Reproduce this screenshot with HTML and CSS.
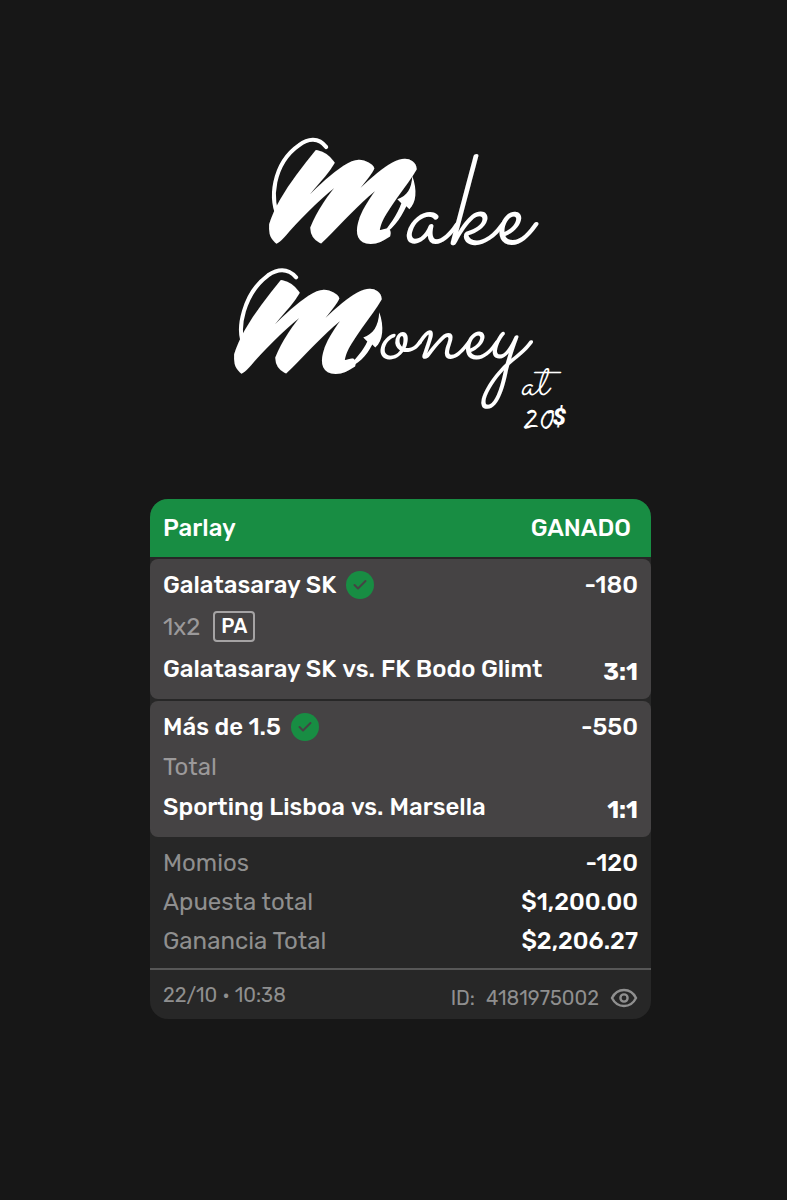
FILE: index.html
```html
<!DOCTYPE html>
<html lang="es">
<head>
    <meta charset="UTF-8">
    <meta name="viewport" content="width=device-width, initial-scale=1.0">
    <title>Make Money at 20$</title>
    <link rel="stylesheet" href="styles.css">
</head>
<body>
    <main class="page">
        <h1 class="brand">
            <svg class="brand-logo" viewBox="230 130 340 305" role="img" aria-label="Make Money at 20$">
                <!-- Make -->
                <text class="brand-initial" x="254" y="236">m</text>
                <text class="brand-script" x="403" y="243">ake</text>
                <path class="brand-loop" d="M280 219C268 201 273 163 299 145C307 139 318 136 326 147"/>
                <path class="brand-hook" d="M412 176C417 190 416 203 409 209L406 206C400 219 391 231 380 236C389 226 397 214 401 203L397 199C407 196 411 189 412 176Z"/>

                <!-- Money -->
                <text class="brand-initial" x="219" y="366">m</text>
                <text class="brand-script brand-script-small" x="377" y="358">oney</text>
                <path class="brand-loop" d="M246 349C234 329 245 292 268 275C277 269 287 267 296 277"/>
                <path class="brand-hook" d="M379 312C384 326 383 341 375 347L372 344C366 356 358 364 346 368C355 359 363 350 367 341L363 337C373 334 378 326 379 312Z"/>

                <!-- at 20$ -->
                <text class="brand-note" x="520" y="394">at</text>
                <text class="brand-amount" x="519" y="429">20</text>
                <text class="brand-dollar" x="552" y="424">$</text>
            </svg>
        </h1>

        <section class="ticket">
            <header class="ticket-header">
                <h2>Parlay</h2>
                <span class="status">GANADO</span>
            </header>

            <article class="leg">
                <div class="row">
                    <h3>Galatasaray SK</h3>
                    <svg class="check" viewBox="0 0 28 28" aria-hidden="true">
                        <circle cx="14" cy="14" r="14"/>
                        <path d="M8.5 14L12 17.5L19.5 10"/>
                    </svg>
                    <span class="value">-180</span>
                </div>
                <div class="row market-row">
                    <span class="muted">1x2</span>
                    <span class="tag">PA</span>
                </div>
                <div class="row match-row">
                    <span class="match"><span>Galatasaray SK</span><span>vs.</span><span>FK Bodo Glimt</span></span>
                    <span class="score">3:1</span>
                </div>
            </article>

            <article class="leg">
                <div class="row">
                    <h3>Más de 1.5</h3>
                    <svg class="check" viewBox="0 0 28 28" aria-hidden="true">
                        <circle cx="14" cy="14" r="14"/>
                        <path d="M8.5 14L12 17.5L19.5 10"/>
                    </svg>
                    <span class="value">-550</span>
                </div>
                <div class="row">
                    <span class="muted">Total</span>
                </div>
                <div class="row match-row">
                    <span class="match"><span>Sporting Lisboa</span><span>vs.</span><span>Marsella</span></span>
                    <span class="score">1:1</span>
                </div>
            </article>

            <dl class="totals">
                <div class="row">
                    <dt>Momios</dt>
                    <dd>-120</dd>
                </div>
                <div class="row">
                    <dt>Apuesta total</dt>
                    <dd>$1,200.00</dd>
                </div>
                <div class="row">
                    <dt>Ganancia Total</dt>
                    <dd>$2,206.27</dd>
                </div>
            </dl>

            <footer class="ticket-footer">
                <time>22/10 • 10:38</time>
                <div class="ticket-id">
                    <span>ID:</span>
                    <span>4181975002</span>
                    <button type="button" class="eye" aria-label="Ver ID">
                        <svg viewBox="0 0 28 20" aria-hidden="true">
                            <path d="M2 10C5 4 9 2 14 2S23 4 26 10C23 16 19 18 14 18S5 16 2 10Z"/>
                            <circle cx="14" cy="10" r="3.6"/>
                        </svg>
                    </button>
                </div>
            </footer>
        </section>
    </main>
</body>
</html>
```

FILE: styles.css
```css
* {
    box-sizing: border-box;
}

body {
    margin: 0;
    min-height: 100vh;
    background-color: #171717;
    color: #fff;
    font-family: Rubik, Roboto, sans-serif;
    font-size: 24px;
    line-height: 34px;
}

h1, h2, h3, dl, dd {
    margin: 0;
    font-size: inherit;
    font-weight: inherit;
}

.page {
    padding: 130px 136px 80px 150px;
}

/* Logo */
.brand {
    display: flex;
    justify-content: center;
    margin-bottom: 63px;
}

.brand-logo {
    width: 68%;
    overflow: visible;
    fill: #fff;
}

.brand-initial {
    font-family: "Kaushan Script", Pacifico, Lobster, "Liberation Serif", serif;
    font-size: 174px;
    font-weight: 700;
    font-style: italic;
}

.brand-script {
    font-family: Sacramento, Allura, "Liberation Serif", serif;
    font-size: 130px;
    font-weight: 400;
    font-style: italic;
}

.brand-script-small {
    font-size: 110px;
}

.brand-note {
    font-family: Sacramento, Allura, "Liberation Serif", serif;
    font-size: 46px;
    font-weight: 400;
    font-style: italic;
}

.brand-amount {
    font-family: Caveat, "Dancing Script", "Liberation Serif", serif;
    font-size: 36px;
    font-weight: 400;
}

.brand-dollar {
    font-family: Roboto, sans-serif;
    font-size: 24px;
    font-weight: 900;
    font-style: italic;
}

.brand-loop {
    fill: none;
    stroke: #fff;
    stroke-width: 4;
    stroke-linecap: round;
}

/* Ticket */
.ticket {
    display: flex;
    flex-direction: column;
    gap: 2px;
    background-color: #272727;
    border-radius: 18px;
    overflow: hidden;
}

.ticket-header {
    display: flex;
    justify-content: space-between;
    padding: 12px 20px 12px 13px;
    background-color: #188d43;
    font-weight: 500;
}

.leg {
    display: flex;
    flex-direction: column;
    gap: 6px;
    padding: 9px 13px 13px;
    background-color: #454344;
    border-radius: 8px;
    font-weight: 500;
}

.row {
    display: flex;
    align-items: center;
}

.value {
    margin-left: auto;
}

.check {
    width: 28px;
    height: 28px;
    margin-left: 10px;
}

.check circle {
    fill: #188d43;
}

.check path {
    fill: none;
    stroke: #454344;
    stroke-width: 2;
    stroke-linecap: round;
    stroke-linejoin: round;
}

.muted {
    color: #9b999a;
    font-weight: 400;
}

.market-row {
    gap: 13px;
    height: 38px;
}

.tag {
    padding: 0 6px;
    border: 2px solid #a5a3a4;
    border-radius: 4px;
    font-size: 20px;
    line-height: 27px;
}

.match-row {
    align-items: flex-end;
    justify-content: space-between;
}

.match {
    display: flex;
    gap: 6px;
}

.score {
    font-weight: 700;
    line-height: 28px;
}

.totals {
    display: flex;
    flex-direction: column;
    gap: 5px;
    padding: 7px 13px 10px;
}

.totals .row {
    justify-content: space-between;
}

.totals dt {
    color: #8f8f8f;
}

.totals dd {
    font-weight: 500;
}

.ticket-footer {
    display: flex;
    align-items: flex-end;
    justify-content: space-between;
    margin-top: -2px;
    padding: 8px 13px 7px;
    border-top: 2px solid #575757;
    color: #8f8f8f;
    font-size: 20px;
}

.ticket-id {
    display: flex;
    align-items: center;
    gap: 11px;
    line-height: 28px;
}

.eye {
    display: flex;
    padding: 0;
    border: 0;
    background: none;
    color: inherit;
    cursor: pointer;
}

.eye svg {
    width: 28px;
    height: 20px;
    fill: none;
    stroke: currentColor;
    stroke-width: 2.4;
}
```
